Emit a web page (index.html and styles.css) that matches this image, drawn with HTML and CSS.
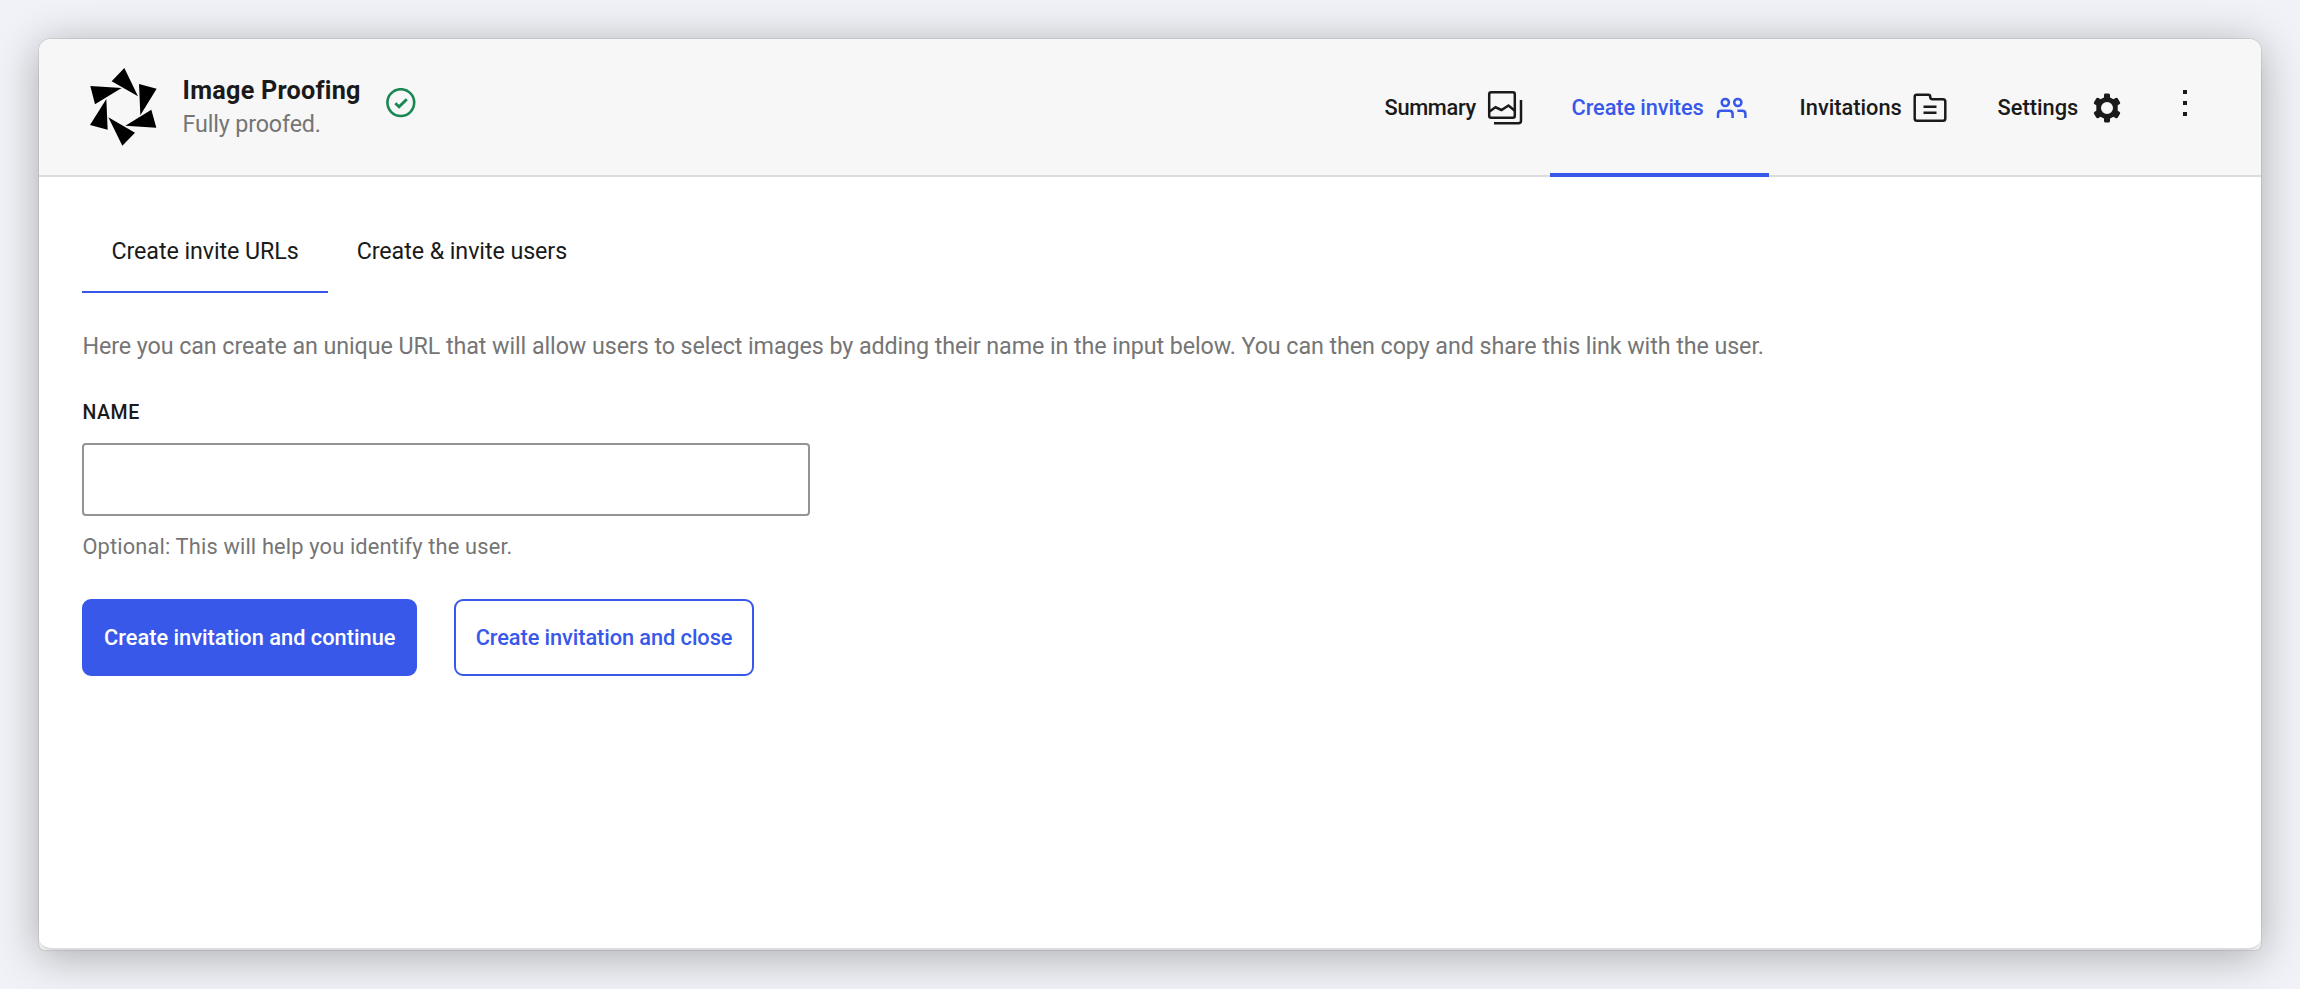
FILE: index.html
```
<!DOCTYPE html>
<html lang="en">
<head>
<meta charset="UTF-8">
<meta name="viewport" content="width=device-width, initial-scale=1.0">
<title>Image Proofing</title>
<link rel="stylesheet" href="styles.css">
</head>
<body>
<div class="panel">
 <div class="panel-inner">
  <header class="header">
    <svg class="logo" width="110" height="100" viewBox="0 0 330 300">
      <path d="M163 39L204 124L125 79zM207 87L260 101L211 181zM244 164L259 218L166 212zM195 233L157 272L115 187zM113 224L60 210L109 132zM75 148L61 93L155 99z"/>
    </svg>
    <div class="brand">
      <h1 class="title">Image Proofing</h1>
      <p class="status">Fully proofed.</p>
    </div>
    <svg class="check" width="30" height="30" viewBox="0 0 30 30" fill="none" stroke="#198754">
      <circle cx="14.8" cy="14.6" r="13.4" stroke-width="2.6"/>
      <path d="M9.3 15.2L13.1 18.8L20.8 11.2" stroke-width="2.9"/>
    </svg>
    <nav class="nav">
      <a class="nav-item summary"><span>Summary</span>
        <svg width="36" height="36" viewBox="0 0 36 36" fill="none" stroke="currentColor" stroke-width="2.5">
          <rect x="2.2" y="2.2" width="25.6" height="25.6" rx="2"/>
          <path d="M2.5 21.5L8.5 17.3L14.5 20L21.5 15.5L27.5 20.5M7 33.3H31.5Q34 33.3 34 30.8V10"/>
        </svg>
      </a>
      <a class="nav-item invites active"><span>Create invites</span>
        <svg width="32" height="24" viewBox="0 0 32 24" fill="none" stroke="currentColor" stroke-width="2.5">
          <circle cx="9.3" cy="6.5" r="3.6"/>
          <circle cx="21.8" cy="6.5" r="3.6"/>
          <path d="M2 22V18Q2 14.8 5.3 14.8H13.3Q16.6 14.8 16.6 18V22M21.4 14.8H26.2Q29.4 14.8 29.4 18V22"/>
        </svg>
      </a>
      <a class="nav-item invitations"><span>Invitations</span>
        <svg width="34" height="30" viewBox="0 0 34 30" fill="none" stroke="currentColor" stroke-width="2.5">
          <path d="M3.7 1.7H15.2Q17.2 1.7 17.2 3.7Q17.2 6.2 19.5 6.2H30Q32.3 6.2 32.3 8.5V25.5Q32.3 27.8 30 27.8H4Q1.7 27.8 1.7 25.5V3.9Q1.7 1.7 3.7 1.7zM10.5 13.8H23.5M10.5 19.8H23.5"/>
        </svg>
      </a>
      <a class="nav-item settings"><span>Settings</span>
        <svg width="28" height="30" viewBox="0 0 28 30" fill="currentColor" fill-rule="evenodd">
          <path d="M12 .5H15.5Q17 .5 17 2V4.5Q18.6 5 20.4 6.2L22.5 5Q24 4.2 24.8 5.5L27 9.2Q27.7 10.5 26.4 11.3L24.7 12.3V17.7L26.4 18.7Q27.7 19.5 27 20.8L24.8 24.5Q24 25.8 22.5 25L20.4 23.8Q18.6 25 17 25.5V28Q17 29.5 15.5 29.5H12.5Q11 29.5 11 28V25.5Q9.4 25 7.6 23.8L5.5 25Q4 25.8 3.2 24.5L1 20.8Q.3 19.5 1.6 18.7L3.3 17.7V12.3L1.6 11.3Q.3 10.5 1 9.2L3.2 5.5Q4 4.2 5.5 5L7.6 6.2Q9.4 5 11 4.5V2Q11 .5 12 .5zM14 9A6 6 0 1 0 14 21A6 6 0 1 0 14 9z"/>
        </svg>
      </a>
    </nav>
    <svg class="dots" width="4" height="26" viewBox="0 0 4 26">
      <path d="M0 0H4V4H0zM0 11H4V15H0zM0 22H4V26H0z"/>
    </svg>
  </header>
  <main class="content">
    <div class="tabs">
      <a class="tab selected">Create invite URLs</a>
      <a class="tab">Create &amp; invite users</a>
    </div>
    <p class="intro">Here you can create an unique URL that will allow users to select images by adding their name in the input below. You can then copy and share this link with the user.</p>
    <label class="label" for="name">NAME</label>
    <input class="input" id="name" type="text">
    <p class="help">Optional: This will help you identify the user.</p>
    <div class="actions">
      <button class="btn primary">Create invitation and continue</button>
      <button class="btn outline">Create invitation and close</button>
    </div>
  </main>
 </div>
</div>
</body>
</html>
```
FILE: styles.css
```
* { box-sizing: border-box; }
body { margin: 0; padding: 39px; height: 989px; background: #f0f2f7; color: #1a1a1a; font-family: Roboto, sans-serif; font-size: 23.27px; overflow: hidden; }
h1, p { margin: 0; }

.panel { height: 911px; background: #efefef; border-radius: 12px 12px 6px 6px; box-shadow: 0 0 0 1px rgba(0, 0, 0, .08), 0 6px 44px rgba(0, 0, 0, .3); }
.panel-inner { height: 911px; background: #fff; border-bottom: 2px solid #dcdcde; border-radius: 12px; overflow: hidden; }

.header { display: flex; align-items: flex-start; height: 138px; background: #f7f7f7; border-bottom: 2px solid #dcdcde; }
.logo { margin: 16px 0 0 31px; }
.brand { margin: 36px 0 0 2.6px; width: 203.4px; }
.title { font-size: 25.2px; line-height: 32px; font-weight: 700; letter-spacing: .25px; }
.status { line-height: 34px; color: #757575; letter-spacing: -.14px; }
.check { margin-top: 49px; }

.nav { display: flex; margin-left: auto; }
.nav-item { display: flex; align-items: center; justify-content: space-between; height: 138px; padding: 3px 21px 0 21.6px; font-size: 21.8px; font-weight: 500; border-bottom: 4px solid transparent; }
.summary { width: 181px; margin-right: 6px; letter-spacing: -.35px; }
.invites { width: 219px; margin-right: 9px; letter-spacing: -.12px; }
.invitations { width: 190px; margin-right: 8px; }
.settings { width: 166px; }
.active { color: #3858e9; border-color: #3858e9; }
.dots { margin: 51px 74px 0 41px; fill: #1a1a1a; }

.content { padding: 36px 43.4px; }
.tabs { display: flex; height: 80px; }
.tab { padding: 20px 29px 0; line-height: 36px; letter-spacing: -.075px; }
.selected { border-bottom: 2px solid #3858e9; }
.intro { margin-top: 35px; line-height: 36px; color: #757575; letter-spacing: -.07px; }
.label { display: block; margin-top: 37px; font-size: 19.5px; line-height: 24px; font-weight: 500; letter-spacing: .6px; }
.input { display: block; width: 728px; height: 73px; margin-top: 18px; border: 2px solid #949494; border-radius: 4px; }
.help { margin-top: 16px; font-size: 21.8px; line-height: 30px; color: #757575; letter-spacing: .165px; }
.actions { display: flex; gap: 37px; margin-top: 37px; }
.btn { height: 77px; padding: 0 19.6px; border: 2px solid #3858e9; border-radius: 9px; font: 500 21.8px Roboto, sans-serif; }
.primary { background: #3858e9; color: #fff; }
.outline { background: #fff; color: #3858e9; letter-spacing: -.09px; }
```
